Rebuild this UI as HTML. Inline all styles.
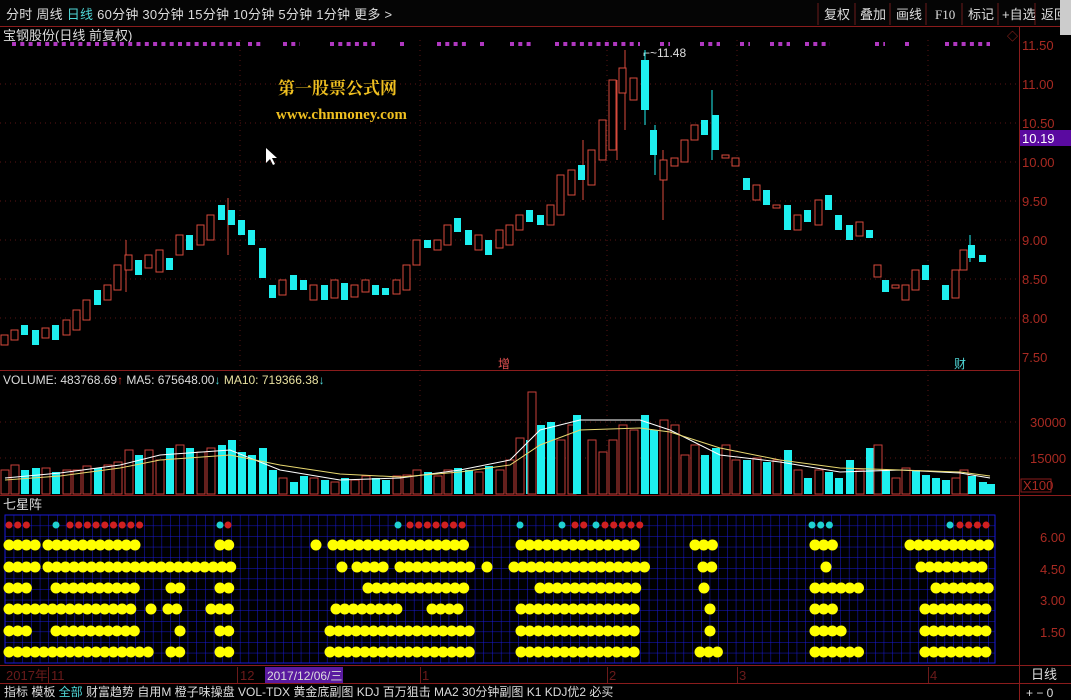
<!DOCTYPE html>
<html><head><meta charset="utf-8"><style>
body{margin:0;background:#000;width:1071px;height:700px;overflow:hidden;font-family:"Liberation Sans","Noto Sans CJK SC",sans-serif}
svg{display:block}
.r{fill:#000;stroke:#d84a3c;stroke-width:1}
.c{fill:#1ef0f0}
.vr{fill:#000;stroke:#c8403a;stroke-width:1}
.vc{fill:#1ef0f0}
.ax{fill:#a82a22;font-size:13px}
.t{fill:#ddd;font-size:13px}
.d{stroke:#ff0;stroke-width:11;stroke-linecap:round;stroke-dasharray:0 8.7;fill:none}
</style></head><body>
<svg width="1071" height="700" xmlns="http://www.w3.org/2000/svg">
<defs>
<pattern id="g" x="5" y="515" width="8.7" height="10.6" patternUnits="userSpaceOnUse">
<path d="M0 0V10.6M0 0H8.7" stroke="#1a1ad8" stroke-width="1" fill="none"/>
</pattern>
</defs>
<rect width="1071" height="700" fill="#000"/>
<!-- top bar -->
<rect x="0" y="0" width="1071" height="26" fill="#050505"/>
<line x1="0" y1="26.5" x2="1071" y2="26.5" stroke="#8a1c1c"/>
<text x="6" y="19" class="t" font-size="13" letter-spacing="0.25">分时  周线  <tspan fill="#4fd6d6">日线</tspan> 60分钟 30分钟 15分钟 10分钟 5分钟 1分钟 更多 &gt;</text>
<g stroke="#6a1a1a"><line x1="818" y1="3" x2="818" y2="25"/><line x1="855" y1="3" x2="855" y2="25"/><line x1="890" y1="3" x2="890" y2="25"/><line x1="926" y1="3" x2="926" y2="25"/><line x1="962" y1="3" x2="962" y2="25"/><line x1="998" y1="3" x2="998" y2="25"/><line x1="1035" y1="3" x2="1035" y2="25"/></g>
<text x="824" y="19" class="t">复权</text><text x="860" y="19" class="t">叠加</text><text x="896" y="19" class="t">画线</text><text x="935" y="19" class="t" font-family="Liberation Serif">F10</text><text x="968" y="19" class="t">标记</text><text x="1002" y="19" class="t">+自选</text><text x="1041" y="19" class="t">返回</text>
<rect x="1060" y="0" width="11" height="35" fill="#ccc"/>
<!-- right axis -->
<line x1="1019.5" y1="27" x2="1019.5" y2="700" stroke="#8a1c1c"/>
<line x1="0" y1="370.5" x2="1019" y2="370.5" stroke="#8a1c1c"/>
<line x1="0" y1="495.5" x2="1071" y2="495.5" stroke="#8a1c1c"/>
<line x1="0" y1="665.5" x2="1071" y2="665.5" stroke="#8a1c1c"/>
<line x1="0" y1="683.5" x2="1071" y2="683.5" stroke="#8a1c1c"/>
<g stroke="#5a1414" stroke-dasharray="1 4">
<line x1="0" y1="84" x2="1019" y2="84"/><line x1="0" y1="123" x2="1019" y2="123"/><line x1="0" y1="162" x2="1019" y2="162"/><line x1="0" y1="201" x2="1019" y2="201"/><line x1="0" y1="240" x2="1019" y2="240"/><line x1="0" y1="279" x2="1019" y2="279"/><line x1="0" y1="318" x2="1019" y2="318"/><line x1="0" y1="422" x2="1019" y2="422"/><line x1="0" y1="458" x2="1019" y2="458"/>
<line x1="240" y1="40" x2="240" y2="495"/><line x1="420" y1="40" x2="420" y2="495"/><line x1="607" y1="40" x2="607" y2="495"/><line x1="737" y1="40" x2="737" y2="495"/><line x1="928" y1="40" x2="928" y2="495"/>
</g>
<text x="1022" y="50" class="ax">11.50</text><text x="1022" y="89" class="ax">11.00</text><text x="1022" y="128" class="ax">10.50</text>
<rect x="1020" y="130" width="51" height="16" fill="#5a0aa0"/><text x="1022" y="143" fill="#fff" font-size="13">10.19</text>
<text x="1022" y="167" class="ax">10.00</text><text x="1022" y="206" class="ax">9.50</text><text x="1022" y="245" class="ax">9.00</text><text x="1022" y="284" class="ax">8.50</text><text x="1022" y="323" class="ax">8.00</text><text x="1022" y="362" class="ax">7.50</text>
<text x="1030" y="427" class="ax">30000</text><text x="1030" y="463" class="ax">15000</text>
<rect x="1021" y="479" width="30" height="13" fill="none" stroke="#8a1c1c"/><text x="1023" y="490" class="ax" font-size="11">X100</text>
<text x="1040" y="542" class="ax">6.00</text><text x="1040" y="574" class="ax">4.50</text><text x="1040" y="605" class="ax">3.00</text><text x="1040" y="637" class="ax">1.50</text>
<text x="1031" y="679" fill="#ddd" font-size="13">日线</text>
<text x="1026" y="697" fill="#ddd" font-size="12">+  −  0</text>
<!-- title -->
<text x="3" y="40" class="t">宝钢股份(日线 前复权)</text>
<text x="1007" y="40" fill="#a82a22" font-size="11">◇</text>
<path d="M12 44H240M248 44H262M283 44H300M330 44H375M400 44H405M437 44H467M480 44H485M510 44H532M555 44H640M660 44H670M700 44H720M740 44H750M770 44H790M805 44H830M875 44H885M905 44H910M945 44H990" stroke="#b038c0" stroke-width="4" stroke-dasharray="4 4.3" fill="none"/>
<text x="278" y="94" fill="#f0c020" font-size="17" font-weight="bold" font-family="Liberation Serif,'Noto Serif CJK SC',serif">第一股票公式网</text>
<text x="276" y="119" fill="#f0c020" font-size="15" font-weight="bold" font-family="Liberation Serif,serif">www.chnmoney.com</text>
<path d="M266 148l0 15 4-4 3 6 2-1-3-6 5 0z" fill="#fff"/>
<text x="643" y="57" fill="#ddd" font-size="12">⌐~11.48</text>
<text x="498" y="368" fill="#e05050" font-size="12">增</text>
<text x="954" y="368" fill="#4fd6d6" font-size="12">财</text>
<!-- wicks -->
<g stroke="#d84a3c"><line x1="625" y1="50" x2="625" y2="130"/><line x1="617" y1="80" x2="617" y2="160"/><line x1="663" y1="150" x2="663" y2="220"/><line x1="228" y1="198" x2="228" y2="255"/><line x1="126" y1="240" x2="126" y2="292"/><line x1="583" y1="140" x2="583" y2="200"/></g>
<g stroke="#1ef0f0"><line x1="645" y1="50" x2="645" y2="125"/><line x1="712" y1="90" x2="712" y2="160"/><line x1="655" y1="125" x2="655" y2="175"/><line x1="970" y1="235" x2="970" y2="262"/></g>
<!-- candles -->
<g>
<rect class="r" x="1" y="335" width="7" height="10"/><rect class="r" x="11" y="330" width="7" height="10"/><rect class="c" x="21" y="325" width="7" height="10"/><rect class="c" x="32" y="330" width="7" height="15"/><rect class="r" x="42" y="328" width="7" height="10"/><rect class="c" x="52" y="325" width="7" height="15"/><rect class="r" x="63" y="320" width="7" height="15"/>
<rect class="r" x="73" y="310" width="7" height="20"/><rect class="r" x="83" y="300" width="7" height="20"/><rect class="c" x="94" y="290" width="7" height="15"/><rect class="r" x="104" y="285" width="7" height="15"/><rect class="r" x="114" y="265" width="7" height="25"/><rect class="r" x="125" y="255" width="7" height="15"/>
<rect class="c" x="135" y="260" width="7" height="15"/><rect class="r" x="145" y="255" width="7" height="13"/><rect class="r" x="156" y="250" width="7" height="22"/><rect class="c" x="166" y="258" width="7" height="12"/><rect class="r" x="176" y="235" width="7" height="20"/>
<rect class="c" x="186" y="235" width="7" height="15"/><rect class="r" x="197" y="225" width="7" height="20"/><rect class="r" x="207" y="215" width="7" height="25"/><rect class="c" x="218" y="205" width="7" height="15"/><rect class="c" x="228" y="210" width="7" height="15"/>
<rect class="c" x="238" y="220" width="7" height="15"/><rect class="c" x="248" y="230" width="7" height="15"/><rect class="c" x="259" y="248" width="7" height="30"/><rect class="c" x="269" y="285" width="7" height="13"/>
<rect class="r" x="279" y="280" width="7" height="15"/><rect class="c" x="290" y="275" width="7" height="15"/><rect class="c" x="300" y="280" width="7" height="10"/><rect class="r" x="310" y="285" width="7" height="15"/><rect class="c" x="321" y="285" width="7" height="15"/>
<rect class="r" x="331" y="280" width="7" height="18"/><rect class="c" x="341" y="283" width="7" height="17"/><rect class="r" x="351" y="285" width="7" height="12"/><rect class="r" x="362" y="280" width="7" height="12"/><rect class="c" x="372" y="285" width="7" height="10"/><rect class="c" x="382" y="288" width="7" height="7"/><rect class="r" x="393" y="280" width="7" height="14"/>
<rect class="r" x="403" y="265" width="7" height="25"/><rect class="r" x="413" y="240" width="7" height="25"/><rect class="c" x="424" y="240" width="7" height="8"/><rect class="r" x="434" y="240" width="7" height="10"/><rect class="r" x="444" y="225" width="7" height="20"/>
<rect class="c" x="454" y="218" width="7" height="14"/><rect class="c" x="465" y="230" width="7" height="15"/><rect class="r" x="475" y="235" width="7" height="15"/><rect class="c" x="485" y="240" width="7" height="15"/><rect class="r" x="496" y="230" width="7" height="18"/><rect class="r" x="506" y="225" width="7" height="20"/>
<rect class="r" x="516" y="215" width="7" height="15"/><rect class="c" x="526" y="210" width="7" height="12"/><rect class="c" x="537" y="215" width="7" height="10"/><rect class="r" x="547" y="205" width="7" height="20"/><rect class="r" x="557" y="175" width="7" height="40"/>
<rect class="r" x="568" y="170" width="7" height="25"/><rect class="c" x="578" y="165" width="7" height="15"/><rect class="r" x="588" y="150" width="7" height="35"/><rect class="r" x="599" y="120" width="7" height="40"/><rect class="r" x="609" y="80" width="7" height="70"/>
<rect class="r" x="619" y="68" width="7" height="25"/><rect class="r" x="630" y="78" width="7" height="22"/><rect class="c" x="641" y="60" width="8" height="50"/><rect class="c" x="650" y="130" width="7" height="25"/>
<rect class="r" x="660" y="160" width="7" height="20"/><rect class="r" x="671" y="158" width="7" height="8"/><rect class="r" x="681" y="140" width="7" height="22"/><rect class="r" x="691" y="125" width="7" height="15"/><rect class="c" x="701" y="120" width="7" height="15"/>
<rect class="c" x="712" y="115" width="7" height="35"/><rect class="r" x="722" y="155" width="7" height="3"/><rect class="r" x="732" y="158" width="7" height="8"/><rect class="c" x="743" y="178" width="7" height="12"/>
<rect class="r" x="753" y="185" width="7" height="15"/><rect class="c" x="763" y="190" width="7" height="15"/><rect class="r" x="773" y="205" width="7" height="3"/><rect class="c" x="784" y="205" width="7" height="25"/><rect class="r" x="794" y="215" width="7" height="15"/><rect class="c" x="804" y="210" width="7" height="12"/>
<rect class="r" x="815" y="200" width="7" height="25"/><rect class="c" x="825" y="195" width="7" height="15"/><rect class="c" x="835" y="215" width="7" height="15"/><rect class="c" x="846" y="225" width="7" height="15"/><rect class="r" x="856" y="222" width="7" height="14"/><rect class="c" x="866" y="230" width="7" height="8"/>
<rect class="r" x="874" y="265" width="7" height="12"/><rect class="c" x="882" y="280" width="7" height="12"/><rect class="r" x="892" y="285" width="7" height="3"/><rect class="r" x="902" y="285" width="7" height="15"/><rect class="r" x="912" y="270" width="7" height="20"/><rect class="c" x="922" y="265" width="7" height="15"/><rect class="c" x="942" y="285" width="7" height="15"/>
<rect class="r" x="952" y="270" width="7" height="28"/><rect class="r" x="960" y="250" width="7" height="20"/><rect class="c" x="968" y="245" width="7" height="13"/><rect class="c" x="979" y="255" width="7" height="7"/>
</g>
<!-- volume -->
<text x="3" y="384" fill="#ddd" font-size="12">VOLUME: 483768.69<tspan fill="#e03030">↑</tspan> MA5: 675648.00<tspan fill="#4fd6d6">↓</tspan> <tspan fill="#e8e0a0">MA10: 719366.38</tspan><tspan fill="#4fd6d6">↓</tspan></text>
<g>
<rect class="vr" x="1" y="470" width="8" height="24"/><rect class="vr" x="11" y="465" width="8" height="29"/><rect class="vc" x="21" y="470" width="8" height="24"/><rect class="vc" x="32" y="468" width="8" height="26"/><rect class="vr" x="42" y="468" width="8" height="26"/><rect class="vc" x="52" y="472" width="8" height="22"/><rect class="vr" x="63" y="470" width="8" height="24"/>
<rect class="vr" x="73" y="470" width="8" height="24"/><rect class="vr" x="83" y="466" width="8" height="28"/><rect class="vc" x="94" y="468" width="8" height="26"/><rect class="vr" x="104" y="465" width="8" height="29"/><rect class="vr" x="114" y="462" width="8" height="32"/><rect class="vr" x="125" y="450" width="8" height="44"/>
<rect class="vc" x="135" y="455" width="8" height="39"/><rect class="vr" x="145" y="450" width="8" height="44"/><rect class="vr" x="156" y="460" width="8" height="34"/><rect class="vc" x="166" y="448" width="8" height="46"/><rect class="vr" x="176" y="445" width="8" height="49"/>
<rect class="vc" x="186" y="448" width="8" height="46"/><rect class="vr" x="197" y="452" width="8" height="42"/><rect class="vr" x="207" y="448" width="8" height="46"/><rect class="vc" x="218" y="445" width="8" height="49"/><rect class="vc" x="228" y="440" width="8" height="54"/>
<rect class="vc" x="238" y="452" width="8" height="42"/><rect class="vc" x="248" y="455" width="8" height="39"/><rect class="vc" x="259" y="448" width="8" height="46"/><rect class="vc" x="269" y="470" width="8" height="24"/>
<rect class="vr" x="279" y="478" width="8" height="16"/><rect class="vc" x="290" y="482" width="8" height="12"/><rect class="vc" x="300" y="476" width="8" height="18"/><rect class="vr" x="310" y="478" width="8" height="16"/><rect class="vc" x="321" y="480" width="8" height="14"/>
<rect class="vr" x="331" y="482" width="8" height="12"/><rect class="vc" x="341" y="478" width="8" height="16"/><rect class="vr" x="351" y="480" width="8" height="14"/><rect class="vr" x="362" y="476" width="8" height="18"/><rect class="vc" x="372" y="478" width="8" height="16"/><rect class="vc" x="382" y="480" width="8" height="14"/><rect class="vr" x="393" y="476" width="8" height="18"/>
<rect class="vr" x="403" y="475" width="8" height="19"/><rect class="vr" x="413" y="470" width="8" height="24"/><rect class="vc" x="424" y="472" width="8" height="22"/><rect class="vr" x="434" y="476" width="8" height="18"/><rect class="vr" x="444" y="470" width="8" height="24"/>
<rect class="vc" x="454" y="468" width="8" height="26"/><rect class="vc" x="465" y="470" width="8" height="24"/><rect class="vr" x="475" y="472" width="8" height="22"/><rect class="vc" x="485" y="466" width="8" height="28"/><rect class="vr" x="496" y="470" width="8" height="24"/><rect class="vr" x="506" y="460" width="8" height="34"/>
<rect class="vr" x="516" y="438" width="8" height="56"/><rect class="vc" x="526" y="440" width="8" height="54"/><rect class="vr" x="528" y="392" width="8" height="102"/><rect class="vc" x="537" y="425" width="8" height="69"/><rect class="vc" x="547" y="422" width="8" height="72"/><rect class="vr" x="557" y="440" width="8" height="54"/>
<rect class="vr" x="568" y="425" width="8" height="69"/><rect class="vc" x="573" y="415" width="8" height="79"/><rect class="vr" x="588" y="440" width="8" height="54"/><rect class="vr" x="599" y="452" width="8" height="42"/><rect class="vr" x="609" y="440" width="8" height="54"/>
<rect class="vr" x="619" y="425" width="8" height="69"/><rect class="vr" x="630" y="430" width="8" height="64"/><rect class="vc" x="641" y="415" width="8" height="79"/><rect class="vc" x="650" y="430" width="8" height="64"/>
<rect class="vr" x="660" y="420" width="8" height="74"/><rect class="vr" x="671" y="425" width="8" height="69"/><rect class="vr" x="681" y="455" width="8" height="39"/><rect class="vr" x="691" y="445" width="8" height="49"/><rect class="vc" x="701" y="455" width="8" height="39"/>
<rect class="vc" x="712" y="448" width="8" height="46"/><rect class="vr" x="722" y="445" width="8" height="49"/><rect class="vr" x="732" y="460" width="8" height="34"/><rect class="vc" x="743" y="460" width="8" height="34"/>
<rect class="vr" x="753" y="458" width="8" height="36"/><rect class="vc" x="763" y="462" width="8" height="32"/><rect class="vr" x="773" y="460" width="8" height="34"/><rect class="vc" x="784" y="450" width="8" height="44"/><rect class="vr" x="794" y="470" width="8" height="24"/><rect class="vc" x="804" y="478" width="8" height="16"/>
<rect class="vr" x="815" y="470" width="8" height="24"/><rect class="vc" x="825" y="472" width="8" height="22"/><rect class="vc" x="835" y="478" width="8" height="16"/><rect class="vc" x="846" y="460" width="8" height="34"/><rect class="vr" x="856" y="470" width="8" height="24"/><rect class="vc" x="866" y="448" width="8" height="46"/>
<rect class="vr" x="874" y="445" width="8" height="49"/><rect class="vc" x="882" y="470" width="8" height="24"/><rect class="vr" x="892" y="478" width="8" height="16"/><rect class="vr" x="902" y="468" width="8" height="26"/><rect class="vc" x="912" y="470" width="8" height="24"/><rect class="vc" x="922" y="475" width="8" height="19"/><rect class="vc" x="932" y="478" width="8" height="16"/><rect class="vc" x="942" y="480" width="8" height="14"/>
<rect class="vr" x="952" y="478" width="8" height="16"/><rect class="vr" x="960" y="470" width="8" height="24"/><rect class="vc" x="968" y="476" width="8" height="18"/><rect class="vc" x="979" y="482" width="8" height="12"/><rect class="vc" x="987" y="484" width="8" height="10"/>
</g>
<polyline points="5,478 60,473 120,465 160,455 230,450 280,470 340,480 400,478 460,470 510,460 540,430 580,420 640,420 670,430 720,455 780,462 840,472 900,470 960,473 990,478" fill="none" stroke="#fff" stroke-width="1"/>
<polyline points="5,480 60,476 120,468 160,460 230,455 280,465 340,474 400,477 460,472 510,465 540,445 580,430 640,428 670,432 720,448 780,460 840,468 900,470 960,472 990,476" fill="none" stroke="#e8d870" stroke-width="1"/>
<!-- bottom panel -->
<text x="3" y="509" class="t">七星阵</text>
<rect x="5" y="515" width="990" height="148" fill="url(#g)"/>
<rect x="5" y="515" width="990" height="148" fill="none" stroke="#1a1ad8"/>
<g stroke="#d02020" stroke-width="7" stroke-linecap="round" stroke-dasharray="0 8.7" fill="none">
<path d="M9 525H30M70 525H140M228 525H235M410 525H470M575 525H585M605 525H640M960 525H990"/></g>
<g stroke="#20d0d0" stroke-width="7" stroke-linecap="round" stroke-dasharray="0 8.7" fill="none">
<path d="M56 525H64M220 525H221M398 525H406M520 525H528M562 525H570M596 525H598M812 525H830M950 525H958"/></g>
<path class="d" d="M9 545H36M48 545H137M220 545H232M316 545H317M333 545H472M521 545H638M695 545H714M815 545H834M910 545H990"/>
<path class="d" d="M9 567H36M48 567H234M342 567H343M357 567H384M400 567H472M487 567H488M514 567H645M703 567H712M826 567H827M921 567H990"/>
<path class="d" d="M9 588H27M56 588H137M171 588H180M220 588H232M368 588H464M540 588H640M704 588H705M815 588H860M936 588H990"/>
<path class="d" d="M9 609H134M151 609H152M168 609H180M211 609H232M336 609H400M432 609H459M521 609H640M710 609H711M815 609H834M925 609H990"/>
<path class="d" d="M9 631H27M56 631H137M180 631H181M220 631H232M330 631H472M521 631H640M710 631H711M815 631H845M925 631H990"/>
<path class="d" d="M9 652H152M171 652H180M220 652H232M330 652H472M521 652H640M700 652H720M815 652H860M925 652H990"/>
<!-- date bar -->
<text x="6" y="680" fill="#6a1a1a" font-size="13">2017年</text><line x1="48.5" y1="667" x2="48.5" y2="683" stroke="#6a1a1a"/><text x="51" y="680" fill="#6a1a1a" font-size="13">11</text>
<line x1="237.5" y1="667" x2="237.5" y2="683" stroke="#6a1a1a"/><text x="240" y="680" fill="#6a1a1a" font-size="13">12</text>
<rect x="265" y="667" width="78" height="16" fill="#5a1aa0"/><text x="267" y="680" fill="#ddd" font-size="12">2017/12/06/三</text>
<line x1="420.5" y1="667" x2="420.5" y2="683" stroke="#6a1a1a"/><text x="422" y="680" fill="#6a1a1a" font-size="13">1</text>
<line x1="607.5" y1="667" x2="607.5" y2="683" stroke="#6a1a1a"/><text x="609" y="680" fill="#6a1a1a" font-size="13">2</text>
<line x1="737.5" y1="667" x2="737.5" y2="683" stroke="#6a1a1a"/><text x="739" y="680" fill="#6a1a1a" font-size="13">3</text>
<line x1="928.5" y1="667" x2="928.5" y2="683" stroke="#6a1a1a"/><text x="930" y="680" fill="#6a1a1a" font-size="13">4</text>
<!-- tabs -->
<text x="4" y="696" fill="#ddd" font-size="12">指标 模板 <tspan fill="#4fd6d6">全部</tspan> 财富趋势 自用M 橙子味操盘 VOL-TDX 黄金底副图 KDJ 百万狙击 MA2 30分钟副图 K1 KDJ优2 必买</text>
</svg>
</body></html>
